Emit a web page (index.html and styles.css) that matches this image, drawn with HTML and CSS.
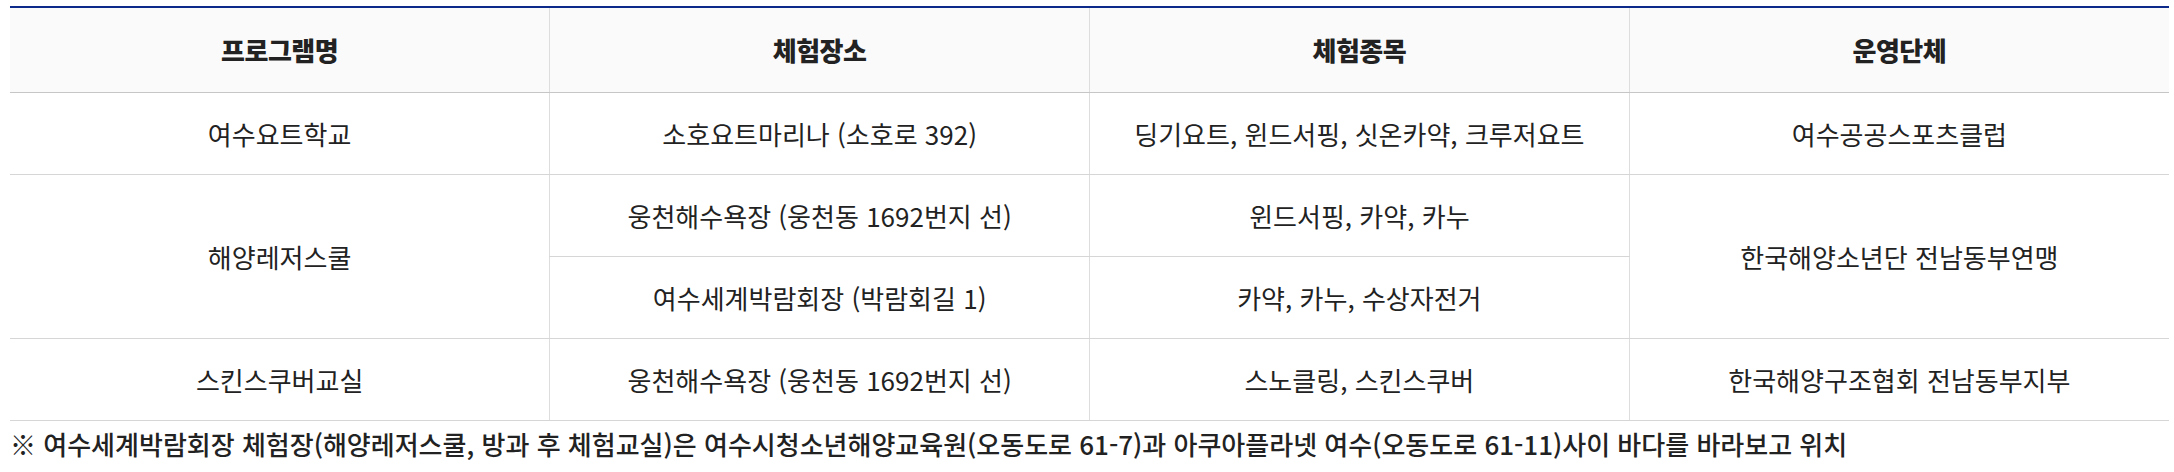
FILE: index.html
```html
<!DOCTYPE html>
<html lang="ko">
<head>
<meta charset="utf-8">
<title>체험 프로그램</title>
<link rel="stylesheet" href="styles.css">
</head>
<body>
<div class="wrap">
  <table class="program-table">
    <thead>
      <tr>
        <th>프로그램명</th>
        <th>체험장소</th>
        <th>체험종목</th>
        <th>운영단체</th>
      </tr>
    </thead>
    <tbody>
      <tr>
        <td>여수요트학교</td>
        <td>소호요트마리나 (소호로 392)</td>
        <td>딩기요트, 윈드서핑, 싯온카약, 크루저요트</td>
        <td>여수공공스포츠클럽</td>
      </tr>
      <tr>
        <td rowspan="2">해양레저스쿨</td>
        <td>웅천해수욕장 (웅천동 1692번지 선)</td>
        <td>윈드서핑, 카약, 카누</td>
        <td rowspan="2">한국해양소년단 전남동부연맹</td>
      </tr>
      <tr>
        <td>여수세계박람회장 (박람회길 1)</td>
        <td>카약, 카누, 수상자전거</td>
      </tr>
      <tr>
        <td>스킨스쿠버교실</td>
        <td>웅천해수욕장 (웅천동 1692번지 선)</td>
        <td>스노클링, 스킨스쿠버</td>
        <td>한국해양구조협회 전남동부지부</td>
      </tr>
    </tbody>
  </table>
  <p class="note">※ 여수세계박람회장 체험장(해양레저스쿨, 방과 후 체험교실)은 여수시청소년해양교육원(오동도로 61-7)과 아쿠아플라넷 여수(오동도로 61-11)사이 바다를 바라보고 위치</p>
</div>
</body>
</html>
```

FILE: styles.css
```css
html, body {
  margin: 0;
  padding: 0;
  background: #ffffff;
}

body {
  font-family: "Noto Sans CJK KR", "Noto Sans", sans-serif;
  color: #222222;
}

.wrap {
  padding: 6px 5px 0 10px;
}

.program-table {
  width: 100%;
  table-layout: fixed;
  border-collapse: collapse;
  border-top: 2px solid #0c2a8a;
}

.program-table th,
.program-table td {
  padding: 0;
  text-align: center;
  vertical-align: middle;
  font-size: 26px;
  line-height: 1.3;
  border-left: 1px solid #dddddd;
  border-bottom: 1px solid #d6d6d6;
}

.program-table th:first-child,
.program-table tbody tr:not(:nth-child(3)) td:first-child {
  border-left: none;
}

.program-table th {
  height: 84px;
  background: #fafafa;
  font-weight: 900;
  letter-spacing: -0.5px;
  color: #222222;
  border-bottom-color: #c6c6c6;
}

.program-table td {
  height: 81px;
  font-weight: 400;
  color: #222222;
}

.note {
  margin: 0;
  padding-top: 5px;
  font-size: 26px;
  line-height: 36px;
  font-weight: 500;
  color: #222222;
}
```
